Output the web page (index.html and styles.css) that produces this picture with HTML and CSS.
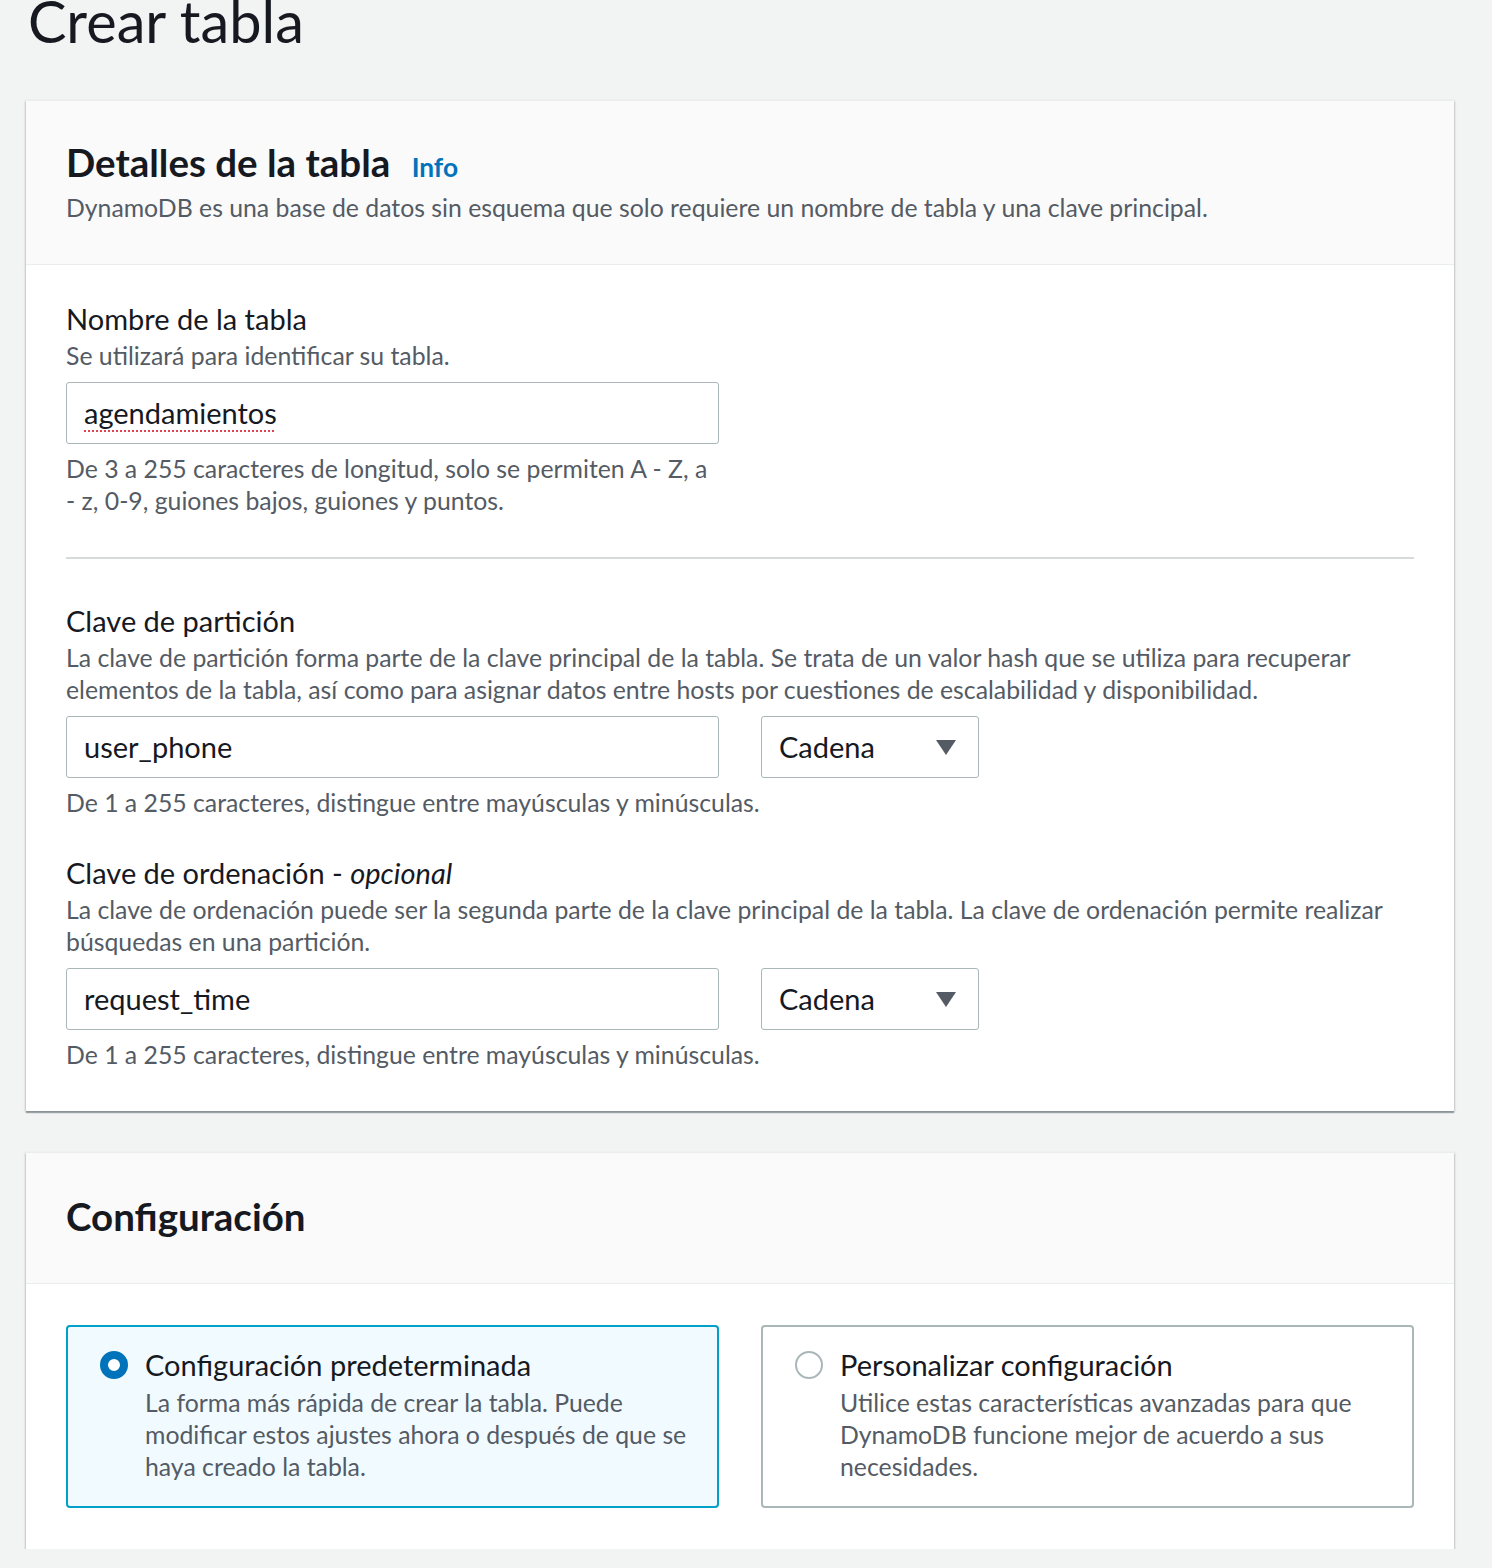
FILE: index.html
```html
<!DOCTYPE html>
<html lang="es">
<head>
<meta charset="utf-8">
<title>Crear tabla</title>
<link rel="stylesheet" href="styles.css">
</head>
<body>
<main class="page">
  <h1 class="page-title">Crear tabla</h1>

  <section class="card">
    <header class="card-header">
      <h2 class="card-title">Detalles de la tabla <a class="info" href="#">Info</a></h2>
      <p class="card-desc">DynamoDB es una base de datos sin esquema que solo requiere un nombre de tabla y una clave principal.</p>
    </header>
    <div class="card-body">
      <div class="field">
        <div class="label">Nombre de la tabla</div>
        <div class="desc">Se utilizará para identificar su tabla.</div>
        <div class="control-row">
          <div class="input"><span class="spell">agendamientos</span></div>
        </div>
        <div class="constraint narrow">De 3 a 255 caracteres de longitud, solo se permiten A - Z, a - z, 0-9, guiones bajos, guiones y puntos.</div>
      </div>

      <hr class="divider">

      <div class="field">
        <div class="label">Clave de partición</div>
        <div class="desc">La clave de partición forma parte de la clave principal de la tabla. Se trata de un valor hash que se utiliza para recuperar elementos de la tabla, así como para asignar datos entre hosts por cuestiones de escalabilidad y disponibilidad.</div>
        <div class="control-row">
          <div class="input">user_phone</div>
          <div class="select">Cadena<span class="caret"></span></div>
        </div>
        <div class="constraint">De 1 a 255 caracteres, distingue entre mayúsculas y minúsculas.</div>
      </div>

      <div class="field field-next">
        <div class="label">Clave de ordenación - <i>opcional</i></div>
        <div class="desc">La clave de ordenación puede ser la segunda parte de la clave principal de la tabla. La clave de ordenación permite realizar búsquedas en una partición.</div>
        <div class="control-row">
          <div class="input">request_time</div>
          <div class="select">Cadena<span class="caret"></span></div>
        </div>
        <div class="constraint">De 1 a 255 caracteres, distingue entre mayúsculas y minúsculas.</div>
      </div>
    </div>
  </section>

  <section class="card card-config">
    <header class="card-header header-plain">
      <h2 class="card-title">Configuración</h2>
    </header>
    <div class="card-body tiles">
      <div class="tile tile-selected">
        <span class="radio radio-on"></span>
        <div class="tile-text">
          <div class="tile-title">Configuración predeterminada</div>
          <div class="tile-desc">La forma más rápida de crear la tabla. Puede modificar estos ajustes ahora o después de que se haya creado la tabla.</div>
        </div>
      </div>
      <div class="tile">
        <span class="radio"></span>
        <div class="tile-text">
          <div class="tile-title">Personalizar configuración</div>
          <div class="tile-desc">Utilice estas características avanzadas para que DynamoDB funcione mejor de acuerdo a sus necesidades.</div>
        </div>
      </div>
    </div>
  </section>
</main>
</body>
</html>
```
FILE: styles.css
```css
* { box-sizing: border-box; }
html, body { margin: 0; padding: 0; }
body {
  background: #f2f3f3;
  font-family: Lato, "Open Sans", sans-serif;
  color: #16191f;
  overflow: hidden;
}
.page { padding: 0 38px 0 26px; }

.page-title {
  margin: -9px 0 0 2px;
  font-size: 57.7px;
  line-height: 60px;
  font-weight: 400;
  color: #16191f;
}

.card {
  margin-top: 49px;
  background: #fff;
  border-top: 1px solid #eaeded;
  box-shadow: 0 2px 1px 0 rgba(0, 28, 36, 0.3), 1px 1px 2px 0 rgba(0, 28, 36, 0.15), -1px 1px 2px 0 rgba(0, 28, 36, 0.15);
}
.card-config { margin-top: 41px; }

.card-header {
  background: #fafafa;
  border-bottom: 1px solid #eaeded;
  padding: 41px 40px 40px;
}
.header-plain { padding: 43px 40px 47px; }

.card-title {
  margin: 0;
  height: 40px;
  font-size: 38.5px;
  line-height: 40px;
  font-weight: 700;
  color: #16191f;
}
.info {
  margin-left: 12px;
  font-size: 26.3px;
  line-height: 1;
  font-weight: 700;
  color: #0073bb;
  text-decoration: none;
}
.card-desc {
  margin: 10px 0 0;
  font-size: 24.8px;
  line-height: 32px;
  color: #545b64;
}

.card-body { padding: 38px 40px 40px; }

.label {
  font-size: 29px;
  line-height: 32px;
  color: #16191f;
}
.desc {
  margin-top: 5px;
  font-size: 24.8px;
  line-height: 32px;
  color: #545b64;
}
.control-row {
  display: flex;
  gap: 42px;
  margin-top: 10px;
}
.input {
  width: 653px;
  height: 62px;
  border: 1.5px solid #aab7b8;
  border-radius: 3px;
  background: #fff;
  padding: 0 17px;
  font-size: 29px;
  line-height: 59px;
  color: #16191f;
}
.spell {
  text-decoration: underline dotted #e0454f;
  text-underline-offset: 6px;
  text-decoration-thickness: 2px;
}
.select {
  position: relative;
  width: 218px;
  height: 62px;
  border: 1.5px solid #aab7b8;
  border-radius: 3px;
  background: #fff;
  padding: 0 17px;
  font-size: 29px;
  line-height: 59px;
  color: #16191f;
}
.caret {
  position: absolute;
  right: 22px;
  top: 23px;
  width: 0;
  height: 0;
  border-left: 10.5px solid transparent;
  border-right: 10.5px solid transparent;
  border-top: 15px solid #545b64;
}
.constraint {
  margin-top: 9px;
  font-size: 24.8px;
  line-height: 32px;
  color: #545b64;
}
.constraint.narrow { width: 653px; }

.divider {
  margin: 40px 0 46px;
  border: 0;
  height: 2px;
  background: #d5dbdb;
}
.field-next { margin-top: 38px; }

.tiles {
  display: flex;
  gap: 42px;
  padding: 41px 40px 41px;
}
.tile {
  flex: 1 1 0;
  display: flex;
  align-items: flex-start;
  gap: 17px;
  border: 2px solid #aab7b8;
  border-radius: 4px;
  padding: 22px 24px 23px 32px;
  min-height: 183px;
}
.tile-selected {
  border-color: #00a1c9;
  background: #f1faff;
}
.radio {
  flex: none;
  width: 28px;
  height: 28px;
  margin-top: 2px;
  border-radius: 50%;
  border: 2.5px solid #aab7b8;
  background: #fff;
}
.radio-on {
  border: 8.5px solid #0073bb;
}
.tile-title {
  font-size: 29px;
  line-height: 32px;
  color: #16191f;
}
.tile-desc {
  margin-top: 6px;
  font-size: 24.8px;
  line-height: 32px;
  color: #545b64;
}
```
